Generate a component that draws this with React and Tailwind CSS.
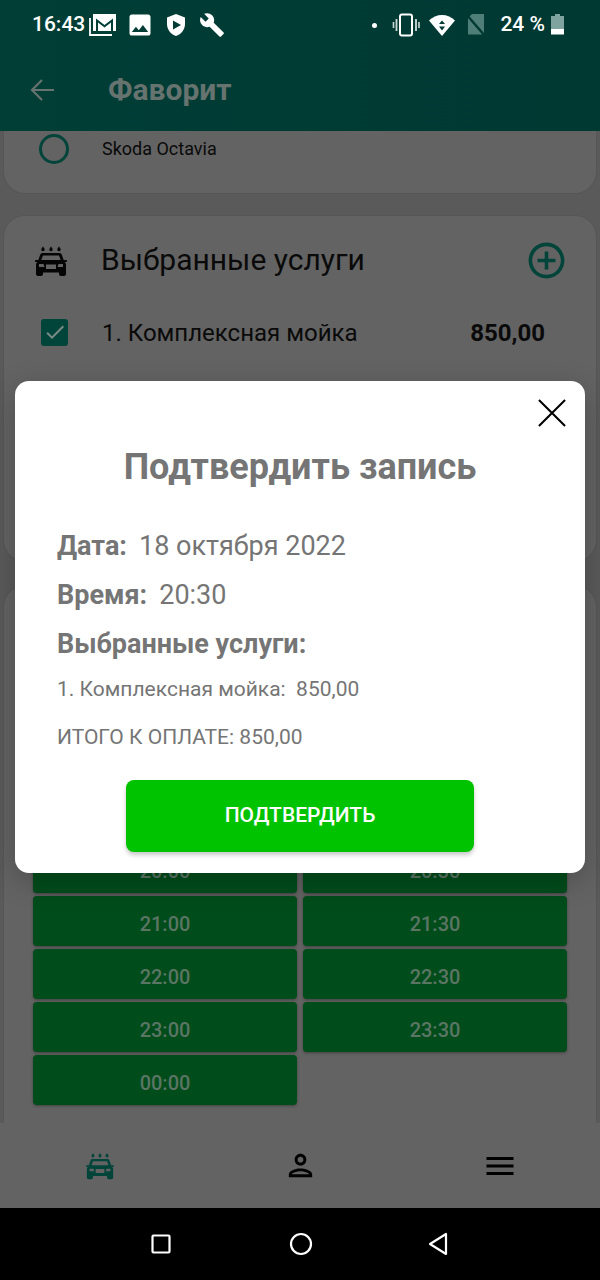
import React from 'react';
import { MdAddCircleOutline, MdBuild, MdImage, MdMenu, MdOutlinePerson, MdCheck } from 'react-icons/md';

const times = [
    '16:00', '16:30', '17:00', '17:30', '18:00', '18:30', '19:00', '19:30', '20:00', '20:30',
    '21:00', '21:30', '22:00', '22:30', '23:00', '23:30', '00:00',
];

const CarWash = ({ className }) => (
    <svg viewBox="0 0 34 32" className={className} fill="currentColor">
        <path d="M9 1.500c1 1.300 1.700 2.200 1.700 3a1.700 1.700 0 0 1-3.400 0c0-.8.7-1.700 1.700-3zM17 1.500c1 1.300 1.700 2.200 1.700 3a1.700 1.700 0 0 1-3.400 0c0-.8.7-1.700 1.700-3zM25 1.500c1 1.300 1.700 2.200 1.700 3a1.700 1.700 0 0 1-3.400 0c0-.8.7-1.700 1.700-3z" />
        <path fillRule="evenodd" d="M8.500 8h17c1 0 1.800.6 2.200 1.500l2 5.500h2.300c.6 0 1 .4 1 1s-.4 1-1 1h-1.200c.8.7 1.200 1.600 1.200 2.700V29c0 1.100-.9 2-2 2h-3c-1.100 0-2-.9-2-2v-1.500H9V29c0 1.100-.9 2-2 2H4c-1.100 0-2-.9-2-2v-9.300c0-1.100.4-2 1.200-2.700H2c-.6 0-1-.4-1-1s.4-1 1-1h2.300l2-5.500C6.700 8.600 7.500 8 8.500 8zM9 10.500 7.300 15h19.400L25 10.500H9zM5 19v3h5.500l-1-3H5zm24 0h-4.500l-1 3H29v-3zm-17 .500V24h10v-4.500H12z" />
    </svg>
);

const ShieldPlay = () => (
    <svg viewBox="0 0 20 24" className="w-5 h-6" fill="#fff">
        <path fillRule="evenodd" d="M10 1 1 4.500V11c0 5.500 3.800 10.300 9 12 5.200-1.700 9-6.500 9-12V4.500L10 1zM7 7.500l8 4.500-8 4.500v-9z" />
    </svg>
);

const MailStack = () => (
    <svg viewBox="0 0 28 24" className="w-[28px] h-6" fill="none">
        <path d="M1 5v17h22" stroke="#fff" strokeWidth="1.800" />
        <path d="M4 1h23v17H4z" fill="#fff" />
        <path d="M7 18V5.500l8.500 6.500L24 5.500V18" fill="#003e36" />
        <path d="M9 18V9.500l6.500 5 6.500-5V18z" fill="#fff" />
    </svg>
);

const Vibrate = () => (
    <svg viewBox="0 0 28 24" className="w-[28px] h-6" fill="none" stroke="#fff">
        <rect x="8" y="1.500" width="12" height="21" rx="2" strokeWidth="2" />
        <path d="M4.500 6v12M24 6v12" strokeWidth="1.800" opacity=".8" />
        <path d="M1.500 9v6M27 9v6" strokeWidth="1.600" opacity=".8" />
    </svg>
);

const Wifi = () => (
    <svg viewBox="0 0 28 24" className="w-[28px] h-6">
        <path d="M14 23 1 7.500C4.500 4 9 2 14 2s9.500 2 13 5.500L14 23z" fill="#fff" />
        <path d="m14 7.500 3 3.500h-6zM14 17.500 11 13.500h6z" fill="#003a34" />
    </svg>
);

const NoSim = () => (
    <svg viewBox="0 0 20 24" className="w-5 h-6">
        <path d="M6 1h12v20.500H2V5z" fill="#4f7e78" />
        <path d="M0 1l19 22" stroke="#003832" strokeWidth="2.400" />
    </svg>
);

const Battery = () => (
    <svg viewBox="0 0 13 24" className="w-[13px] h-6">
        <path d="M4 1h5v2h4v18H0V3h4z" fill="#7fa39e" />
        <path d="M0 16h13v5.500H0z" fill="#fff" />
    </svg>
);

const App = () => {
    return (
    <div className="relative w-[600px] h-[1280px] overflow-hidden flex flex-col bg-[#5a5a5a] font-['Roboto',sans-serif]">
        <header className="h-[131px] shrink-0 bg-[linear-gradient(90deg,#003e36,#003832)]">
            <div className="h-[48px] pt-[2px] flex items-center pl-[32px] pr-[36px] text-white">
                <span className="text-[21px] font-medium mr-[4px]">16:43</span>
                <MailStack />
                <span className="ml-[9px] flex"><MdImage size={28} /></span>
                <span className="ml-[12px] flex"><ShieldPlay /></span>
                <span className="ml-[13px] flex"><MdBuild size={26} /></span>
                <span className="ml-auto mr-[2px] w-[5px] h-[5px] rounded-full bg-white" />
                <span className="ml-[13px] flex"><Vibrate /></span>
                <span className="ml-[8px] flex"><Wifi /></span>
                <span className="ml-[10px] flex"><NoSim /></span>
                <span className="ml-[14px] text-[21px] font-medium">24 %</span>
                <span className="ml-[6px] flex"><Battery /></span>
            </div>
            <div className="h-[83px] flex items-center pl-[30px] text-[#66736f]">
                <svg viewBox="0 0 24 24" className="w-6 h-6" fill="none" stroke="currentColor" strokeWidth="2.200">
                    <path d="M24 12H2M12 2 2 12l10 10" />
                </svg>
                <span className="ml-[54px] text-[30px] font-bold leading-none">Фаворит</span>
            </div>
        </header>

        <main className="flex-1 min-h-0 overflow-hidden px-[3px]">
            <section className="h-[63px] rounded-b-[22px] bg-[#636363] border-b border-x border-[#565656] flex items-start pl-[35px] pt-[3px]">
                <span className="w-[30px] h-[30px] rounded-full border-[3px] border-[#00443a]" />
                <span className="ml-[33px] mt-[1px] text-[18px] text-[#0a0a0a]">Skoda Octavia</span>
            </section>

            <section className="mt-[21px] h-[347px] rounded-[22px] bg-[#636363] border border-[#565656] pl-[30px] pr-[28px] pt-[23px]">
                <div className="flex items-center h-[44px]">
                    <CarWash className="w-[34px] h-[32px] text-[#050505]" />
                    <span className="ml-[33px] -mt-[3px] text-[30px] text-[#0a0a0a]">Выбранные услуги</span>
                    <MdAddCircleOutline size={43} className="ml-auto -mt-[2px] text-[#00443a]" />
                </div>
                <div className="flex items-center h-[44px] mt-[28px]">
                    <span className="ml-[7px] -mt-[2px] w-[27px] h-[27px] rounded-[3px] bg-[#00443a] flex items-center justify-center text-[#7a8a87]">
                        <MdCheck size={24} />
                    </span>
                    <span className="ml-[34px] text-[24px] text-[#0a0a0a]">1. Комплексная мойка</span>
                    <span className="ml-auto mr-[23px] text-[24px] font-bold text-[#0a0a0a]">850,00</span>
                </div>
            </section>

            <section className="mt-[23px] h-[700px] rounded-[22px] bg-[#636363] border border-[#565656] pl-[29px] pr-[29px] pt-[45px]">
                <div className="grid grid-cols-2 gap-x-[6px] gap-y-[3px]">
                    {times.map((time) => (
                        <div key={time} className="h-[50px] rounded-[4px] bg-[#014c1b] shadow-[0_1px_3px_rgba(0,0,0,0.35)] flex items-center justify-center pt-[5px] text-[20px] font-medium text-[#5a7563]">
                            {time}
                        </div>
                    ))}
                </div>
            </section>
        </main>

        <nav className="h-[85px] shrink-0 bg-[#636363] grid grid-cols-3 place-items-center">
            <CarWash className="w-[30px] h-[28px] text-[#00443a]" />
            <MdOutlinePerson size={35} className="text-black" />
            <MdMenu size={36} className="text-black" />
        </nav>

        <footer className="h-[72px] shrink-0 bg-black flex items-center justify-center text-white">
            <svg viewBox="0 0 20 20" className="w-5 h-5 mr-[118px] -ml-[2px]" fill="none" stroke="#fff" strokeWidth="2.200">
                <rect x="1.500" y="1.500" width="17" height="17" rx="1" />
            </svg>
            <svg viewBox="0 0 24 24" className="w-6 h-6" fill="none" stroke="#fff" strokeWidth="2.200">
                <circle cx="12" cy="12" r="10" />
            </svg>
            <svg viewBox="0 0 20 24" className="w-5 h-6 ml-[115px]" fill="none" stroke="#fff" strokeWidth="2.200" strokeLinejoin="round">
                <path d="M18 2v20L2 12z" />
            </svg>
        </footer>

        <div className="absolute left-[15px] top-[381px] w-[570px] h-[492px] rounded-[14px] bg-white shadow-[0_8px_30px_rgba(0,0,0,0.22)]">
            <svg viewBox="0 0 30 30" className="absolute right-[19px] top-[18px] w-[28px] h-[28px]" fill="none" stroke="#000" strokeWidth="2.200">
                <path d="M1 1l28 28M29 1 1 29" />
            </svg>
            <h2 className="pt-[65px] text-center text-[36px] leading-[42px] font-bold text-[#757575]">Подтвердить запись</h2>
            <div className="pl-[42px] pt-[42px] text-[#757575]">
                <p className="text-[27px] leading-[32px]"><span className="font-bold mr-[12px]">Дата:</span>18 октября 2022</p>
                <p className="mt-[17px] text-[27px] leading-[32px]"><span className="font-bold mr-[12px]">Время:</span>20:30</p>
                <p className="mt-[17px] text-[27px] leading-[32px] font-bold">Выбранные услуги:</p>
                <p className="mt-[15px] text-[21px] leading-[28px]">1. Комплексная мойка:&nbsp; 850,00</p>
                <p className="mt-[20px] text-[21px] leading-[28px]">ИТОГО К ОПЛАТЕ: 850,00</p>
            </div>
            <button className="block mx-auto mt-[29px] w-[348px] h-[72px] rounded-[8px] bg-[#00c300] shadow-[0_3px_4px_rgba(0,0,0,0.22)] text-[21px] font-medium text-white">
                ПОДТВЕРДИТЬ
            </button>
        </div>
    </div>
    );
};

export default App;
